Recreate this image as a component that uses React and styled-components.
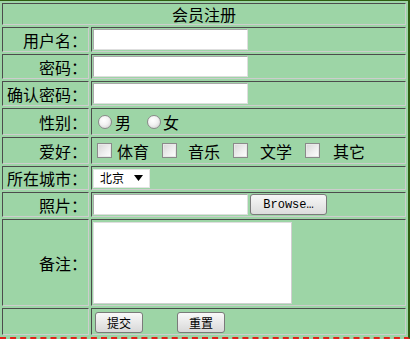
import React from 'react';
import styled, { createGlobalStyle } from 'styled-components';

const Global = createGlobalStyle`
    html, body {
        margin: 0;
        padding: 0;
        background: #ffffff;
    }
    body {
        font-family: "Noto Sans CJK SC", "Liberation Sans", sans-serif;
        font-size: 16px;
        color: #000;
    }
`;

const Frame = styled.div`
    width: 408px;
    background-color: #9dd5a6;
    border-top: 1px solid #2f5e12;
    border-right: 2px solid #2f5e12;
    border-bottom: 2px dashed #e0201a;
`;

const Form = styled.form`
    display: grid;
    grid-template-columns: 87px 315px;
    grid-template-rows: 22px 25px 25px 25px 27px 27px 24px 25px 87px 27px;
    gap: 2px;
    padding: 2px;
`;

const Cell = styled.div`
    box-sizing: border-box;
    display: flex;
    align-items: ${p => p.$top ? 'flex-start' : 'center'};
    justify-content: ${p => p.$right ? 'flex-end' : p.$center ? 'center' : 'flex-start'};
    grid-column: ${p => p.$span ? '1 / span 2' : 'auto'};
    padding: 1px;
    border: 1px solid;
    border-color: #4c4c4c #cdcdcd #cdcdcd #4c4c4c;
    line-height: 18px;
    white-space: nowrap;
    overflow: hidden;
`;

const Label = styled.span`
    font-size: 16px;
`;

const TextInput = styled.input`
    box-sizing: border-box;
    width: ${p => p.$w || 155}px;
    height: 21px;
    margin: 0;
    padding: 1px 2px;
    background: #fff;
    border: 1px solid;
    border-color: #a9a9a9 #dedede #dedede #a9a9a9;
    outline: none;
`;

const Radio = styled.input.attrs({ type: 'radio' })`
    appearance: none;
    box-sizing: border-box;
    width: 14px;
    height: 14px;
    margin: 0 0 0 ${p => p.$ml}px;
    border: 1px solid #8a8a8a;
    border-radius: 50%;
    background: radial-gradient(circle at 40% 35%, #ffffff 0%, #f2f2f2 45%, #c9c9c9 100%);
`;

const Check = styled.input.attrs({ type: 'checkbox' })`
    appearance: none;
    box-sizing: border-box;
    width: 15px;
    height: 15px;
    margin: 0 0 0 ${p => p.$ml}px;
    border: 1px solid #8a8a8a;
    background: linear-gradient(135deg, #d6d6d6 0%, #eeeeee 55%, #ffffff 100%);
    box-shadow: inset 0 0 0 1px #e8e8e8;
`;

const Option = styled.span`
    margin-left: ${p => p.$ml}px;
    font-size: 16px;
`;

const Select = styled.span`
    box-sizing: border-box;
    display: inline-flex;
    align-items: center;
    justify-content: space-between;
    width: 57px;
    height: 19px;
    padding: 0 6px 0 6px;
    background: #fff;
    border: 1px solid #e4e4e4;
    font-size: 12px;
`;

const Arrow = styled.svg`
    width: 9px;
    height: 6px;
`;

const Browse = styled.button`
    box-sizing: border-box;
    width: 77px;
    height: 21px;
    margin-left: 2px;
    padding: 0;
    border: 1px solid #7a7a7a;
    border-radius: 3px;
    background: linear-gradient(#f7f7f7, #dcdcdc);
    font-family: "Liberation Mono", monospace;
    font-size: 12px;
    color: #000;
`;

const Memo = styled.textarea`
    box-sizing: border-box;
    width: 199px;
    height: 82px;
    margin: 1px 0 0 0;
    background: #fff;
    border: 1px solid;
    border-color: #dedede #d0d0d0 #d0d0d0 #dedede;
    resize: none;
    outline: none;
`;

const Button = styled.button`
    box-sizing: border-box;
    width: 48px;
    height: 21px;
    margin: 2px 0 0 ${p => p.$ml}px;
    padding: 0;
    border: 1px solid #7a7a7a;
    border-radius: 3px;
    background: linear-gradient(#f9f9f9, #d8d8d8);
    font-family: "Noto Sans CJK SC", sans-serif;
    font-size: 12px;
    line-height: 18px;
    color: #000;
`;

const hobbies = [
    { name: '体育', box: 4, text: 5 },
    { name: '音乐', box: 13, text: 11 },
    { name: '文学', box: 13, text: 12 },
    { name: '其它', box: 13, text: 13 },
];

const App = () => (
    <>
        <Global />
        <Frame>
            <Form onSubmit={e => e.preventDefault()}>
                <Cell $span $center><Label>会员注册</Label></Cell>

                <Cell $right><Label>用户名：</Label></Cell>
                <Cell><TextInput type="text" /></Cell>

                <Cell $right><Label>密码：</Label></Cell>
                <Cell><TextInput type="password" /></Cell>

                <Cell $right><Label>确认密码：</Label></Cell>
                <Cell><TextInput type="password" /></Cell>

                <Cell $right><Label>性别：</Label></Cell>
                <Cell>
                    <Radio name="sex" $ml={5} />
                    <Option $ml={3}>男</Option>
                    <Radio name="sex" $ml={16} />
                    <Option $ml={2}>女</Option>
                </Cell>

                <Cell $right><Label>爱好：</Label></Cell>
                <Cell>
                    {hobbies.map(h => (
                        <React.Fragment key={h.name}>
                            <Check $ml={h.box} />
                            <Option $ml={h.text}>{h.name}</Option>
                        </React.Fragment>
                    ))}
                </Cell>

                <Cell $right><Label>所在城市：</Label></Cell>
                <Cell>
                    <Select>
                        北京
                        <Arrow viewBox="0 0 9 6"><path d="M0 0h9L4.5 6z" fill="#000" /></Arrow>
                    </Select>
                </Cell>

                <Cell $right><Label>照片：</Label></Cell>
                <Cell>
                    <TextInput type="text" />
                    <Browse type="button">Browse…</Browse>
                </Cell>

                <Cell $right><Label>备注：</Label></Cell>
                <Cell><Memo /></Cell>

                <Cell />
                <Cell $top>
                    <Button type="submit" $ml={2}>提交</Button>
                    <Button type="reset" $ml={34}>重置</Button>
                </Cell>
            </Form>
        </Frame>
    </>
);

export default App;
